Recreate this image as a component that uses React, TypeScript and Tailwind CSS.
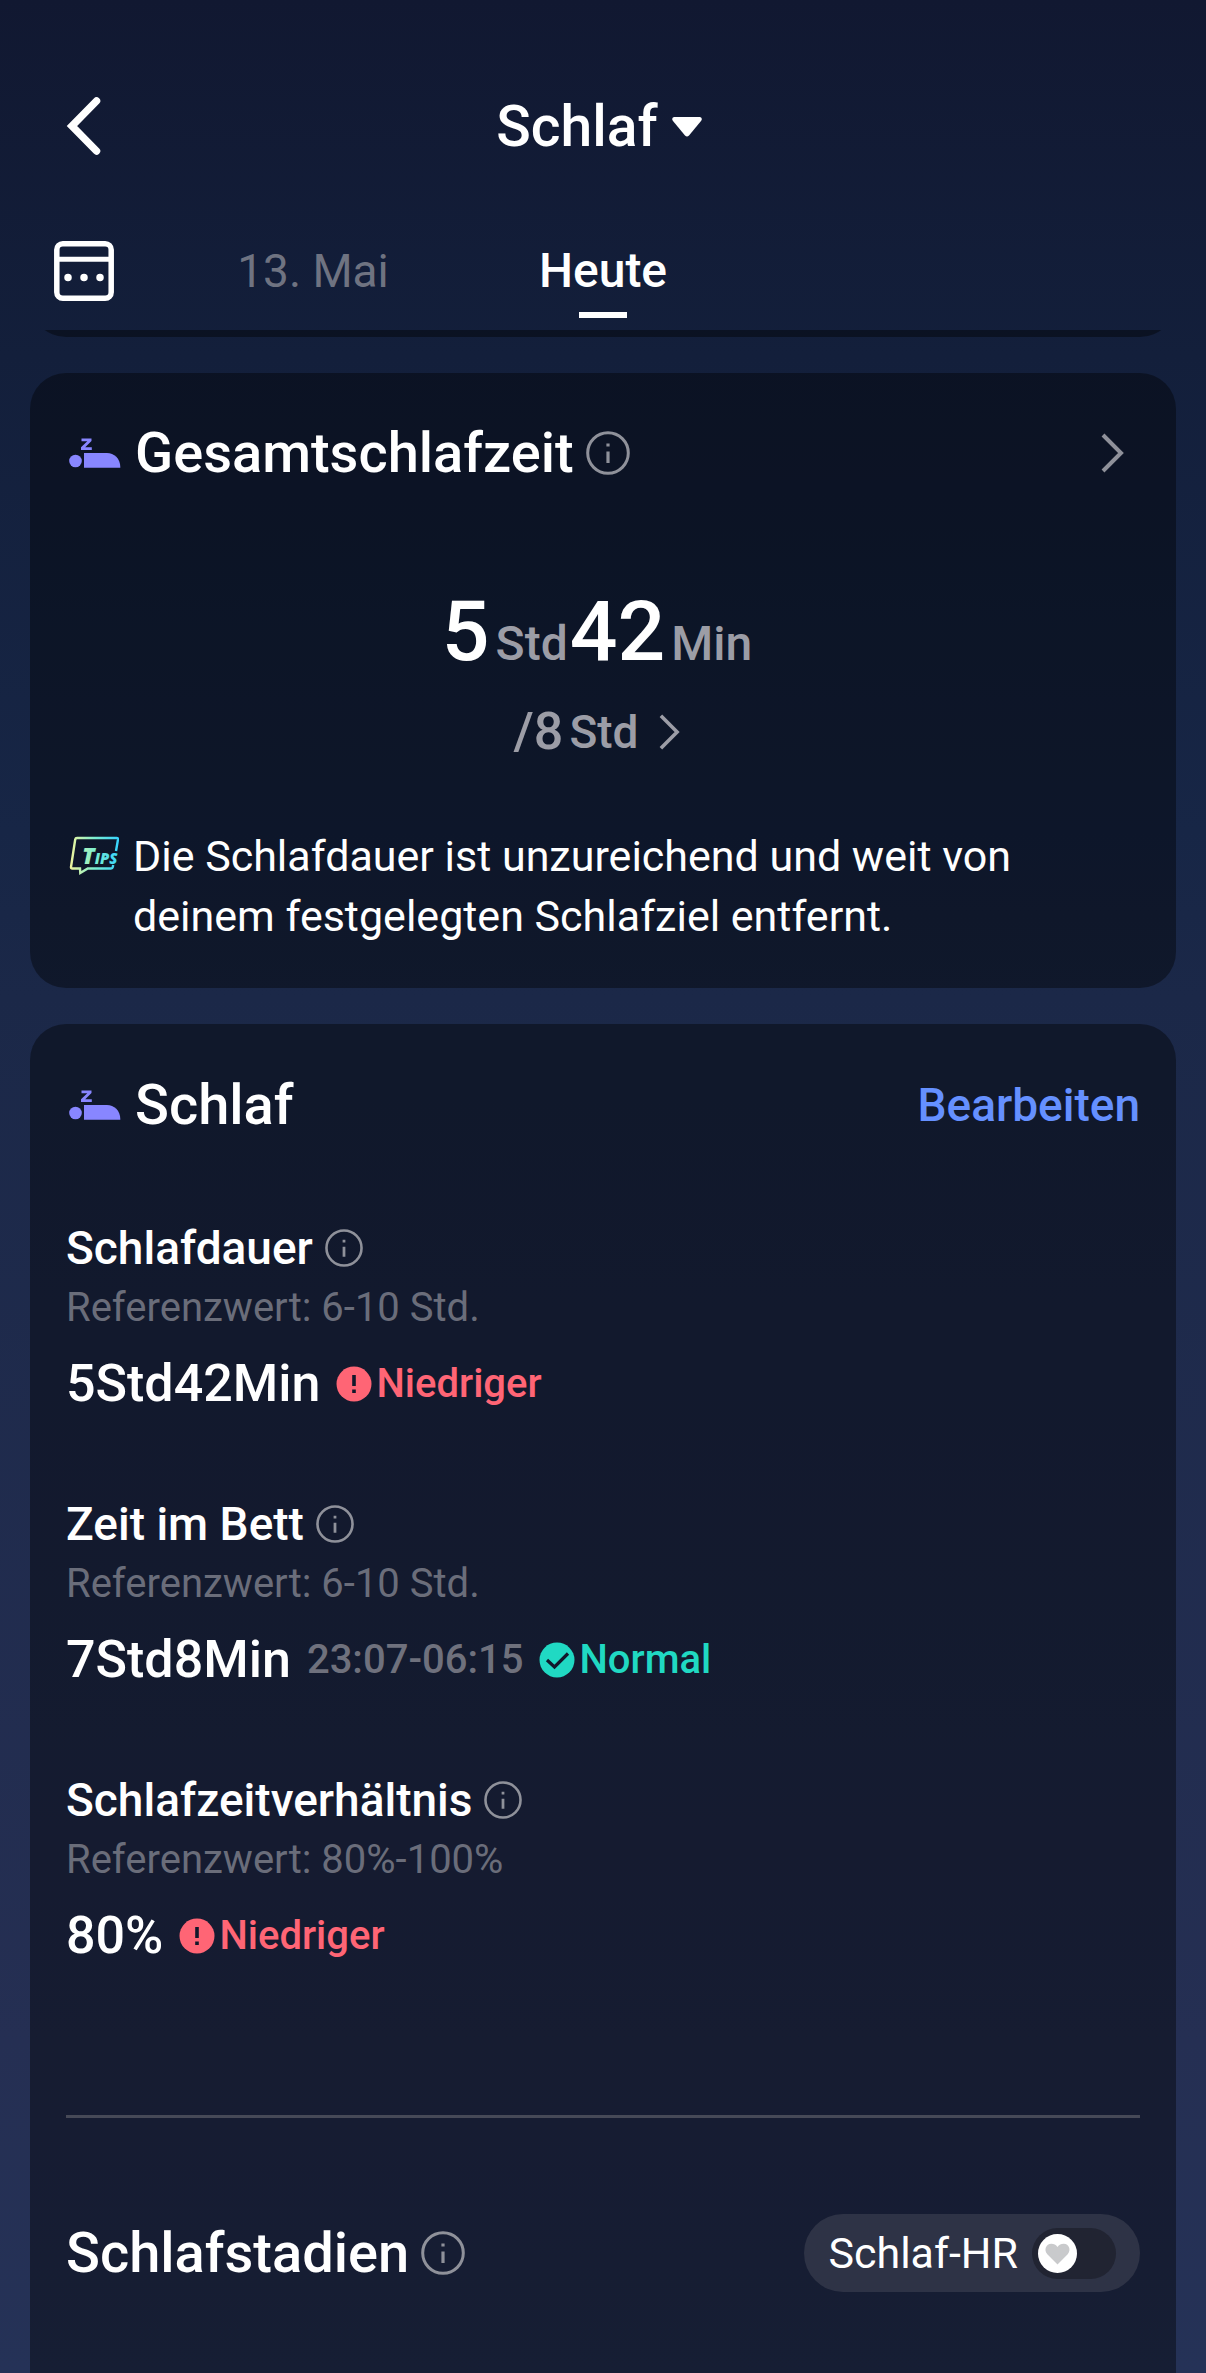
import { useState } from "react";

type Status = "low" | "normal";

type Metric = {
  label: string;
  reference: string;
  value: string;
  range?: string;
  status: Status;
};

const METRICS: Metric[] = [
  { label: "Schlafdauer", reference: "6-10 Std.", value: "5Std42Min", status: "low" },
  { label: "Zeit im Bett", reference: "6-10 Std.", value: "7Std8Min", range: "23:07-06:15", status: "normal" },
  { label: "Schlafzeitverhältnis", reference: "80%-100%", value: "80%", status: "low" },
];

function SleepIcon() {
  return (
    <svg viewBox="0 0 52 30" className="ml-[3px] h-[30px] w-[52px] shrink-0 fill-[#8886ff]" aria-hidden="true">
      <path d="M12.500 0.500h10v2.600l-6.300 6.200h6.600v2.700h-10.800v-2.700l6.300-6.100h-5.800z" />
      <circle cx="6.500" cy="23" r="6.300" />
      <path d="M15 15h23c7 0 13.300 5.500 13.300 14v.8H15z" />
    </svg>
  );
}

function InfoButton({ label, small }: { label: string; small?: boolean }) {
  return (
    <button type="button" aria-label={`Info zu ${label}`} className="shrink-0 text-[#8f919a]">
      <svg viewBox="0 0 44 44" className={small ? "size-[38px]" : "size-11"} fill="none" aria-hidden="true">
        <circle cx="22" cy="22" r="20.300" stroke="currentColor" strokeWidth="3" />
        <path d="M22 20.500v11.500M22 12.500v3" stroke="currentColor" strokeWidth="3.200" />
      </svg>
    </button>
  );
}

function Chevron({ className }: { className: string }) {
  return (
    <svg viewBox="0 0 24 40" className={className} fill="none" aria-hidden="true">
      <path d="M3 2l18 18L3 38" stroke="currentColor" strokeWidth="4" />
    </svg>
  );
}

function TipsIcon() {
  return (
    <svg viewBox="0 0 50 40" className="mt-2.5 ml-[3px] h-10 w-[50px] shrink-0" aria-hidden="true">
      <defs>
        <linearGradient id="tips" x1="0" y1="0" x2="50" y2="0" gradientUnits="userSpaceOnUse">
          <stop offset="0" stopColor="#f4f59a" />
          <stop offset="0.500" stopColor="#7defd0" />
          <stop offset="1" stopColor="#35d3ff" />
        </linearGradient>
      </defs>
      <path
        d="M47 15l2-11.500q.2-1.500-1.300-1.500H8q-1.500 0-1.800 1.500L2 31q-.2 1.500 1.300 1.500H11l.3 4.500 7.500-4.500H42q1.500 0 1.800-1.500l.4-2"
        fill="none"
        stroke="url(#tips)"
        strokeWidth="2.400"
      />
      <text x="13" y="28" fill="url(#tips)" fontFamily="Open Sans, sans-serif" fontWeight="800" fontStyle="italic">
        <tspan fontSize="23">T</tspan>
        <tspan fontSize="15">IPS</tspan>
      </text>
    </svg>
  );
}

function StatusBadge({ status }: { status: Status }) {
  if (status === "normal") {
    return (
      <span className="flex items-center gap-1 text-[40px] leading-[60px] font-medium text-[#20d9c3]">
        <svg viewBox="0 0 36 36" className="size-9" aria-hidden="true">
          <circle cx="18" cy="18" r="17.500" fill="currentColor" />
          <path d="M8 18l7.500 7L29 11.500" fill="none" stroke="#12182b" strokeWidth="3.200" />
        </svg>
        Normal
      </span>
    );
  }
  return (
    <span className="flex items-center gap-1 text-[40px] leading-[60px] font-medium text-[#ff6575]">
      <svg viewBox="0 0 36 36" className="size-9" aria-hidden="true">
        <circle cx="18" cy="18" r="17.500" fill="currentColor" />
        <path d="M18 9v11M18 23.500v3.500" stroke="#12182b" strokeWidth="3.600" />
      </svg>
      Niedriger
    </span>
  );
}

function MetricRow({ label, reference, value, range, status }: Metric) {
  return (
    <li>
      <h3 className="flex items-center gap-3 text-[46px] leading-[60px] font-medium">
        {label}
        <InfoButton label={label} small />
      </h3>
      <p className="text-[40px] leading-[60px] text-[#6a6d7a]">Referenzwert: {reference}</p>
      <div className="mt-2.5 flex items-center gap-4">
        <span className="text-[52px] leading-[72px] font-medium">{value}</span>
        {range && <span className="text-[40px] leading-[60px] font-medium text-[#6f717d]">{range}</span>}
        <StatusBadge status={status} />
      </div>
    </li>
  );
}

export default function App() {
  const [showHr, setShowHr] = useState(false);

  return (
    <div className="flex min-h-screen flex-col bg-[linear-gradient(#111831,#131f3b_15%,#172646_35%,#1b2848_42%,#252f53_86%,#253257)] font-[Roboto,sans-serif] text-white">
      <header className="px-[30px] pt-[91px]">
        <div className="grid grid-cols-[1fr_auto_1fr] items-center">
          <button type="button" aria-label="Zurück" className="ml-9 w-9">
            <svg viewBox="0 0 36 60" className="h-[60px] w-9" fill="none" aria-hidden="true">
              <path d="M30.500 4L6 29l24.500 25" stroke="white" strokeWidth="7.500" strokeLinecap="round" />
            </svg>
          </button>
          <button type="button" className="flex items-center gap-3.5 pr-2 text-[57px] leading-[72px] font-medium">
            Schlaf
            <svg viewBox="0 0 30 20" className="h-5 w-[30px] fill-white" aria-hidden="true">
              <path d="M2 0h26q3 1 1 4L17 18.500q-2 2-4 0L1 4q-2-3 1-4z" />
            </svg>
          </button>
        </div>

        <nav className="mt-[78px] grid grid-cols-[138px_1fr_1fr_1fr_138px] items-start" aria-label="Tage">
          <button type="button" aria-label="Kalender" className="ml-6 size-[60px]">
            <svg viewBox="0 0 60 60" className="size-[60px]" fill="none" stroke="white" aria-hidden="true">
              <rect x="2.800" y="2.800" width="54.400" height="54.400" rx="6" strokeWidth="5.500" />
              <path d="M3 18.300h54" strokeWidth="5" />
              <path d="M14 36.500h.01M30 36.500h.01M46 36.500h.01" strokeWidth="7.500" strokeLinecap="round" />
            </svg>
          </button>
          <button type="button" className="text-[46px] leading-[60px] text-[#6f7381]">
            13. Mai
          </button>
          <button type="button" aria-current="date" className="flex flex-col items-center text-[48px] leading-[60px] font-medium">
            Heute
            <span className="mt-[11px] h-1.5 w-12 bg-white" />
          </button>
        </nav>
      </header>

      <main className="flex grow flex-col px-[30px]">
        {/* lower edge of the card scrolled under the header */}
        <div className="mt-3 flex h-[7px] items-end overflow-hidden">
          <div className="h-[72px] w-full shrink-0 rounded-[36px] bg-black/40" />
        </div>

        <section className="mt-9 rounded-[36px] bg-black/40 px-9 pt-11 pb-[42px]">
          <div className="flex items-center">
            <SleepIcon />
            <h2 className="ml-3.5 text-[56px] leading-[72px] font-medium">Gesamtschlafzeit</h2>
            <span className="ml-3 flex">
              <InfoButton label="Gesamtschlafzeit" />
            </span>
            <button type="button" aria-label="Details" className="mr-4 ml-auto text-[#8f919a]">
              <Chevron className="h-10 w-6" />
            </button>
          </div>

          <div className="mt-[93px] flex flex-col items-center pr-3 font-medium">
            <p className="flex items-baseline text-[84px] leading-[100px]">
              5<span className="mr-0.5 ml-1.5 text-[48px] text-[#9c9da6]">Std</span>
              42<span className="ml-1.5 text-[48px] text-[#9c9da6]">Min</span>
            </p>
            <button type="button" className="mt-0.5 flex items-center text-[52px] leading-[72px] text-[#9c9da6]">
              /8<span className="mr-5 ml-1.5 text-[46px]">Std</span>
              <Chevron className="h-9 w-[22px]" />
            </button>
          </div>

          <div className="mt-[58px] flex gap-3.5">
            <TipsIcon />
            <p className="max-w-[930px] text-[43px] leading-[60px]">
              Die Schlafdauer ist unzureichend und weit von deinem festgelegten Schlafziel entfernt.
            </p>
          </div>
        </section>

        <section className="mt-9 grow rounded-t-[36px] bg-black/40 px-9 pt-[45px] pb-10">
          <div className="flex items-center">
            <SleepIcon />
            <h2 className="ml-3.5 text-[56px] leading-[72px] font-medium">Schlaf</h2>
            <a href="#bearbeiten" className="ml-auto text-[46px] leading-[60px] font-medium text-[#6590ff]">
              Bearbeiten
            </a>
          </div>

          <ul className="mt-[77px] flex flex-col gap-[74px]">
            {METRICS.map((metric) => (
              <MetricRow key={metric.label} {...metric} />
            ))}
          </ul>

          <hr className="mt-[143px] border-t-3 border-[#464957]" />

          <div className="mt-24 flex items-center">
            <h2 className="text-[56px] leading-[72px] font-medium">Schlafstadien</h2>
            <span className="ml-3 flex">
              <InfoButton label="Schlafstadien" />
            </span>
            <label className="ml-auto flex h-[78px] items-center gap-3.5 rounded-full bg-[#2e3346] px-6 text-[43px] leading-[60px]">
              Schlaf-HR
              <input
                type="checkbox"
                role="switch"
                className="peer sr-only"
                checked={showHr}
                onChange={(e) => setShowHr(e.target.checked)}
              />
              <span className="flex h-[51px] w-[84px] items-center rounded-full bg-[#212432] px-1.5 peer-checked:justify-end peer-checked:bg-[#8886ff]">
                <svg viewBox="0 0 39 39" className="size-[39px]" aria-hidden="true">
                  <circle cx="19.500" cy="19.500" r="19.500" fill="white" />
                  <path
                    d="M19.500 30.500L9.300 20.300C5.500 16 8 9.800 13.300 9.800c2.600 0 4.700 1.100 6.200 3.200 1.500-2.100 3.600-3.200 6.200-3.200 5.300 0 7.800 6.200 4 10.500z"
                    fill="#c9cacc"
                  />
                </svg>
              </span>
            </label>
          </div>
        </section>
      </main>
    </div>
  );
}
